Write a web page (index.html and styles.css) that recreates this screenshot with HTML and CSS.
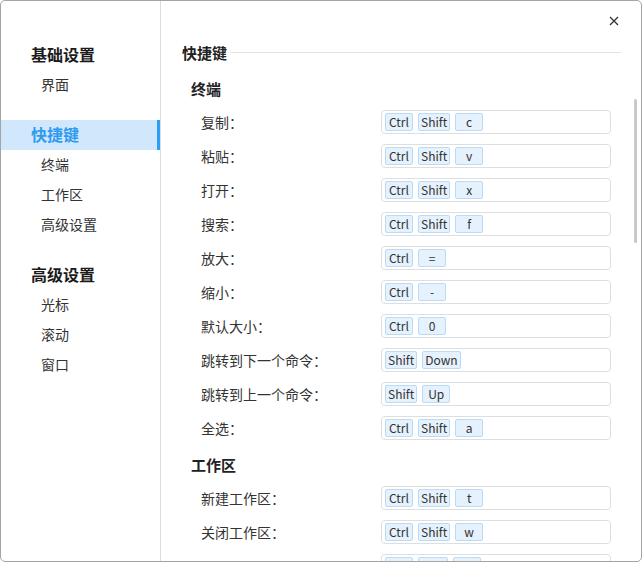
FILE: index.html
```html
<!DOCTYPE html>
<html lang="zh-CN">
<head>
<meta charset="utf-8">
<link rel="stylesheet" href="styles.css">
</head>
<body>
<div class="window">
  <nav class="sidebar">
    <div class="group">
      <div class="nav-head">基础设置</div>
      <div class="nav-item">界面</div>
    </div>
    <div class="group">
      <div class="nav-head active">快捷键</div>
      <div class="nav-item">终端</div>
      <div class="nav-item">工作区</div>
      <div class="nav-item">高级设置</div>
    </div>
    <div class="group">
      <div class="nav-head">高级设置</div>
      <div class="nav-item">光标</div>
      <div class="nav-item">滚动</div>
      <div class="nav-item">窗口</div>
    </div>
  </nav>
  <main class="content">
    <div class="title">快捷键</div>
    <div class="section">
      <div class="sub">终端</div>
      <div class="row"><span class="label">复制：</span><span class="keys"><span class="k">Ctrl</span><span class="k">Shift</span><span class="k">c</span></span></div>
      <div class="row"><span class="label">粘贴：</span><span class="keys"><span class="k">Ctrl</span><span class="k">Shift</span><span class="k">v</span></span></div>
      <div class="row"><span class="label">打开：</span><span class="keys"><span class="k">Ctrl</span><span class="k">Shift</span><span class="k">x</span></span></div>
      <div class="row"><span class="label">搜索：</span><span class="keys"><span class="k">Ctrl</span><span class="k">Shift</span><span class="k">f</span></span></div>
      <div class="row"><span class="label">放大：</span><span class="keys"><span class="k">Ctrl</span><span class="k">=</span></span></div>
      <div class="row"><span class="label">缩小：</span><span class="keys"><span class="k">Ctrl</span><span class="k">-</span></span></div>
      <div class="row"><span class="label">默认大小：</span><span class="keys"><span class="k">Ctrl</span><span class="k">0</span></span></div>
      <div class="row"><span class="label">跳转到下一个命令：</span><span class="keys"><span class="k">Shift</span><span class="k">Down</span></span></div>
      <div class="row"><span class="label">跳转到上一个命令：</span><span class="keys"><span class="k">Shift</span><span class="k">Up</span></span></div>
      <div class="row"><span class="label">全选：</span><span class="keys"><span class="k">Ctrl</span><span class="k">Shift</span><span class="k">a</span></span></div>
    </div>
    <div class="section second">
      <div class="sub">工作区</div>
      <div class="row"><span class="label">新建工作区：</span><span class="keys"><span class="k">Ctrl</span><span class="k">Shift</span><span class="k">t</span></span></div>
      <div class="row"><span class="label">关闭工作区：</span><span class="keys"><span class="k">Ctrl</span><span class="k">Shift</span><span class="k">w</span></span></div>
      <div class="row partial"><span class="label"></span><span class="keys"><span class="k blank"></span><span class="k blank wide"></span><span class="k blank"></span></span></div>
    </div>
    <button class="close" aria-label="关闭">
      <svg width="10" height="10" viewBox="0 0 10 10"><path d="M1 1L9 9M9 1L1 9" stroke="#333" stroke-width="1.3" fill="none"/></svg>
    </button>
    <div class="scrollbar"></div>
  </main>
</div>
</body>
</html>
```
FILE: styles.css
```css
html, body {
  margin: 0;
  padding: 0;
  background: #ffffff;
}
body {
  font-family: "Noto Sans CJK SC", "Noto Sans", sans-serif;
  color: #333;
}
.window {
  box-sizing: border-box;
  width: 642px;
  height: 562px;
  border: 1px solid #a4a4a4;
  border-radius: 5px;
  display: flex;
  overflow: hidden;
  background: #fff;
}
.sidebar {
  box-sizing: border-box;
  width: 160px;
  flex: none;
  border-right: 1px solid #dcdcdc;
  padding-top: 39px;
  display: flex;
  flex-direction: column;
  gap: 20px;
}
.nav-head {
  height: 30px;
  line-height: 28px;
  padding-bottom: 2px;
  box-sizing: border-box;
  padding-left: 30px;
  font-size: 16px;
  font-weight: 700;
  color: #1b1b1b;
}
.nav-head.active {
  background: #d1e8fc;
  color: #2f9bf0;
  box-shadow: inset -3px 0 0 #2b9ef5;
}
.nav-item {
  height: 30px;
  line-height: 28px;
  padding-bottom: 2px;
  box-sizing: border-box;
  padding-left: 40px;
  font-size: 14px;
  color: #333;
}
.content {
  position: relative;
  flex: 1;
  padding: 38px 20px 0 21px;
  overflow: hidden;
}
.title {
  display: flex;
  align-items: center;
  height: 26px;
  font-size: 15px;
  font-weight: 700;
  color: #222;
}
.title::after {
  content: "";
  flex: 1;
  height: 1px;
  background: #e2e2e2;
  margin-left: 3px;
  margin-top: 1px;
}
.section {
  margin-top: 10px;
}
.section.second {
  margin-top: 6px;
}
.sub {
  height: 30px;
  line-height: 28px;
  padding-bottom: 2px;
  box-sizing: border-box;
  padding-left: 9px;
  font-size: 15px;
  font-weight: 700;
  color: #222;
}
.row {
  display: flex;
  align-items: center;
  height: 34px;
  padding-left: 19px;
}
.label {
  width: 180px;
  font-size: 14px;
  line-height: 20px;
  padding-bottom: 1px;
  color: #333;
}
.keys {
  box-sizing: border-box;
  width: 230px;
  height: 24px;
  border: 1px solid #dedede;
  border-radius: 4px;
  padding: 2px 3px;
  display: flex;
  gap: 5px;
}
.k {
  box-sizing: border-box;
  min-width: 28px;
  height: 18px;
  line-height: 15px;
  padding: 0 2px 1px;
  border: 1px solid #b9dbf6;
  border-radius: 2px;
  background: #e5f1fd;
  font-size: 12px;
  color: #333;
  text-align: center;
}
.k.wide {
  min-width: 30px;
}
.close {
  position: absolute;
  top: 14px;
  right: 21px;
  width: 12px;
  height: 12px;
  padding: 0;
  border: none;
  background: transparent;
  display: flex;
  align-items: center;
  justify-content: center;
}
.scrollbar {
  position: absolute;
  top: 98px;
  right: 4px;
  width: 3px;
  height: 144px;
  border-radius: 2px;
  background: #c9c9c9;
}
```
